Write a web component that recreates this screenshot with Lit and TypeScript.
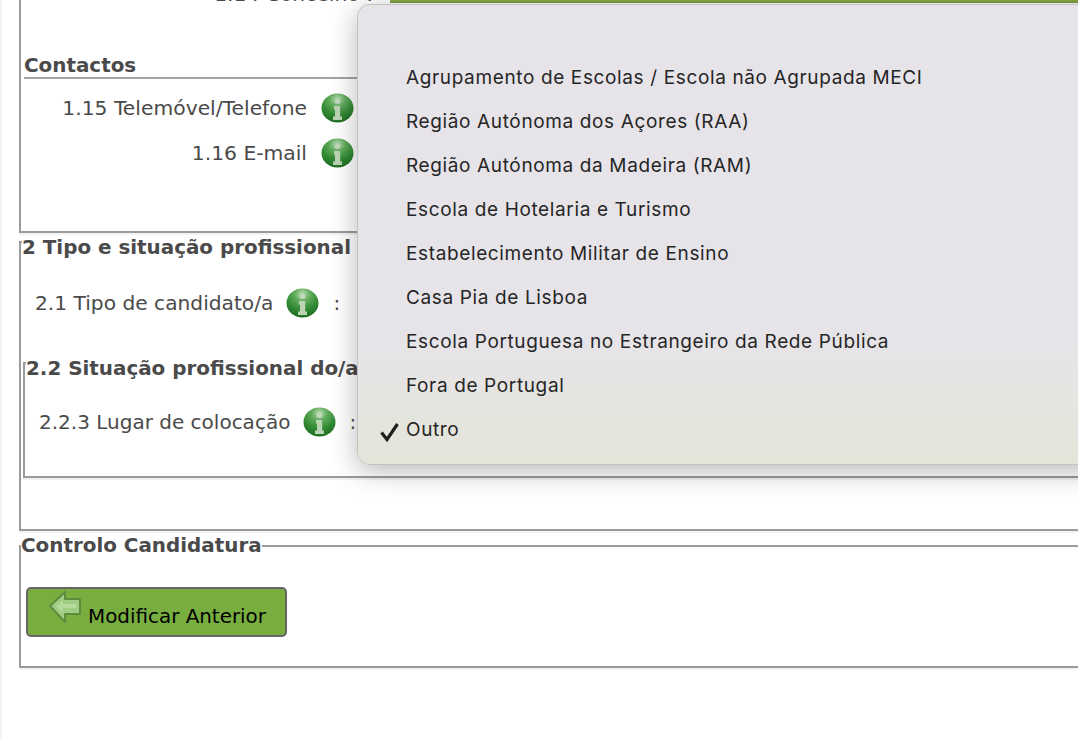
import { LitElement, html, css, svg } from "lit";
import { customElement } from "lit/decorators.js";

const info = html`<svg class="info" viewBox="0 0 33 30" aria-hidden="true">
  <defs>
    <radialGradient id="g" cx="50%" cy="20%" r="80%">
      <stop offset="0" stop-color="#bcdfb6"/><stop offset=".3" stop-color="#62ab5d"/>
      <stop offset=".68" stop-color="#2f8831"/><stop offset="1" stop-color="#1f6d25"/>
    </radialGradient>
    <filter id="s" x="-20%" y="-20%" width="140%" height="140%"><feGaussianBlur stdDeviation=".55"/></filter>
  </defs>
  <g filter="url(#s)">
    <ellipse cx="16.5" cy="15" rx="16" ry="14.500" fill="url(#g)"/>
    <ellipse cx="16.5" cy="8.500" rx="2.800" ry="2.300" fill="#c4d9be"/>
    <path d="M13 13h6.200v10.500H21V27h-9v-3.500h2v-7h-1z" fill="#bcd4b6"/>
  </g>
</svg>`;

const items = [
  "Agrupamento de Escolas / Escola não Agrupada MECI",
  "Região Autónoma dos Açores (RAA)",
  "Região Autónoma da Madeira (RAM)",
  "Escola de Hotelaria e Turismo",
  "Estabelecimento Militar de Ensino",
  "Casa Pia de Lisboa",
  "Escola Portuguesa no Estrangeiro da Rede Pública",
  "Fora de Portugal",
  "Outro",
];

@customElement("app-root")
export class AppRoot extends LitElement {
  static styles = css`
    :host {
      display: block;
      position: relative;
      width: 1078px;
      height: 740px;
      overflow: hidden;
      background: #fff;
      font-family: "DejaVu Sans", Verdana, sans-serif;
      font-size: 20.3px;
      color: #4a4a4a;
    }
    .page {
      box-sizing: border-box;
      height: 740px;
      width: 1100px;
      padding-left: 17px;
      border-left: 2px solid #f3f3f3;
    }
    fieldset {
      margin: 0;
      padding: 0;
      min-width: 0;
      border: 2px solid #9b9b9b;
      border-right: none;
      box-shadow: 0 2px 0 #f2f2f2;
    }
    legend {
      padding: 0;
      font-weight: 700;
      font-size: 19.9px;
      line-height: 22px;
      white-space: nowrap;
    }
    .low { padding: 12px 24px 0 0; margin-left: 1px; }
    .f1 { border-top: none; height: 233px; box-sizing: border-box; }
    .f2 { height: 306px; box-sizing: border-box; margin-top: -8px; }
    .f3 { height: 132px; box-sizing: border-box; margin: 27px 0 0 2px; }
    .f4 { height: 133px; box-sizing: border-box; margin-top: 4px; }
    .top {
      height: 3px;
      display: flex;
      align-items: flex-end;
    }
    .top .lab { width: 352px; text-align: right; line-height: 22px; flex: none; margin-bottom: -2px; height: 22px; }
    .clip { display: flex; align-items: flex-end; height: 3px; overflow: hidden; width: 100%; }
    .field {
      flex: 1;
      height: 3px;
      margin-left: 17px;
      padding-left: 13px;
      background: #86a948;
      border-bottom: 1px solid #6f9238;
      box-sizing: border-box;
      display: flex;
      align-items: flex-end;
      color: #222;
    }
    .field span { line-height: 22px; height: 22px; margin-bottom: -1px; flex: none; }
    h3 {
      margin: 51px 0 0 3px;
      font-size: 19.9px;
      line-height: 23px;
      color: #4a4a4a;
      font-weight: 700;
    }
    .rule { height: 2px; background: #a3a3a3; margin: 0 0 0 3px; }
    .row { display: flex; align-items: center; height: 32px; }
    .contacts { display: grid; gap: 13px; margin-top: 13px; }
    .contacts .lab { width: 286px; text-align: right; white-space: nowrap; flex: none; }
    .contacts .info { margin-left: 14px; }
    .info { width: 33px; height: 30px; flex: none; }
    .r21 { padding-left: 14px; margin-top: 28px; gap: 13px; font-size: 20.2px; }
    .r21 .colon { margin-left: 1px; }
    .r223 { padding-left: 14px; margin-top: 26px; gap: 13px; font-size: 20px; }
    button {
      display: flex;
      align-items: flex-end;
      box-sizing: border-box;
      width: 261px;
      height: 50px;
      margin: 30px 0 0 5px;
      padding: 0 0 6px 20px;
      background: #78ae40;
      border: 2px solid #666;
      border-radius: 5px;
      font: inherit;
      font-size: 19.9px;
      color: #000;
      line-height: 24px;
    }
    button svg { width: 34px; height: 34px; flex: none; margin: 1px 6px 0 0; align-self: flex-start; }
    .menu {
      position: absolute;
      left: 357px;
      top: 4px;
      width: 760px;
      height: 461px;
      box-sizing: border-box;
      padding-top: 50px;
      border-radius: 12px;
      border: 1px solid #c2c2c2;
      background: linear-gradient(180deg, #e6e4e9 0%, #e6e4e9 72%, #e4e5d9 100%);
      box-shadow: 0 6px 28px rgba(0, 0, 0, .28);
      font-family: Inter, "Liberation Sans", sans-serif;
      font-size: 19px;
      letter-spacing: .63px;
      color: #262626;
    }
    .item {
      display: flex;
      align-items: center;
      height: 44px;
      padding-left: 48px;
      position: relative;
      white-space: nowrap;
    }
    .check { position: absolute; left: 21px; top: 15px; width: 21px; height: 20px; }
  `;

  render() {
    return html`
      <div class="page">
        <fieldset class="f1">
          <div class="clip">
            <div class="top"><span class="lab">1.14 Concelho :</span></div>
            <div class="field"><span>Porto</span></div>
          </div>
          <h3>Contactos</h3>
          <div class="rule"></div>
          <div class="contacts">
            <div class="row"><span class="lab">1.15 Telemóvel/Telefone</span>${info}</div>
            <div class="row"><span class="lab">1.16 E-mail</span>${info}</div>
          </div>
        </fieldset>
        <fieldset class="f2">
          <legend class="low">2 Tipo e situação profissional</legend>
          <div class="row r21"><span>2.1 Tipo de candidato/a</span>${info}<span class="colon">:</span></div>
          <fieldset class="f3">
            <legend class="low">2.2 Situação profissional do/a candidato/a</legend>
            <div class="row r223"><span>2.2.3 Lugar de colocação</span>${info}<span>:</span></div>
          </fieldset>
        </fieldset>
        <fieldset class="f4">
          <legend>Controlo Candidatura</legend>
          <button>
            <svg viewBox="0 0 34 34" aria-hidden="true">
              <path d="M2 16 17 2v7h15v15H17v8z" fill="#a0cc84" stroke="#5f8c3c" stroke-width="2" stroke-linejoin="round"/>
              <path d="M8 16 15 10v4h13v4H15v5z" fill="#b5da9c"/>
            </svg>
            <span>Modificar Anterior</span>
          </button>
        </fieldset>
      </div>
      <div class="menu">
        ${items.map(
          (t, i) => html`<div class="item">
            ${i === items.length - 1
              ? html`<svg class="check" viewBox="0 0 21 20" aria-hidden="true">
                  ${svg`<path d="M2.500 10.500 8 17.500 18.500 2" fill="none" stroke="#1f1f1f" stroke-width="3.200"/>`}
                </svg>`
              : ""}
            <span>${t}</span>
          </div>`
        )}
      </div>
    `;
  }
}
